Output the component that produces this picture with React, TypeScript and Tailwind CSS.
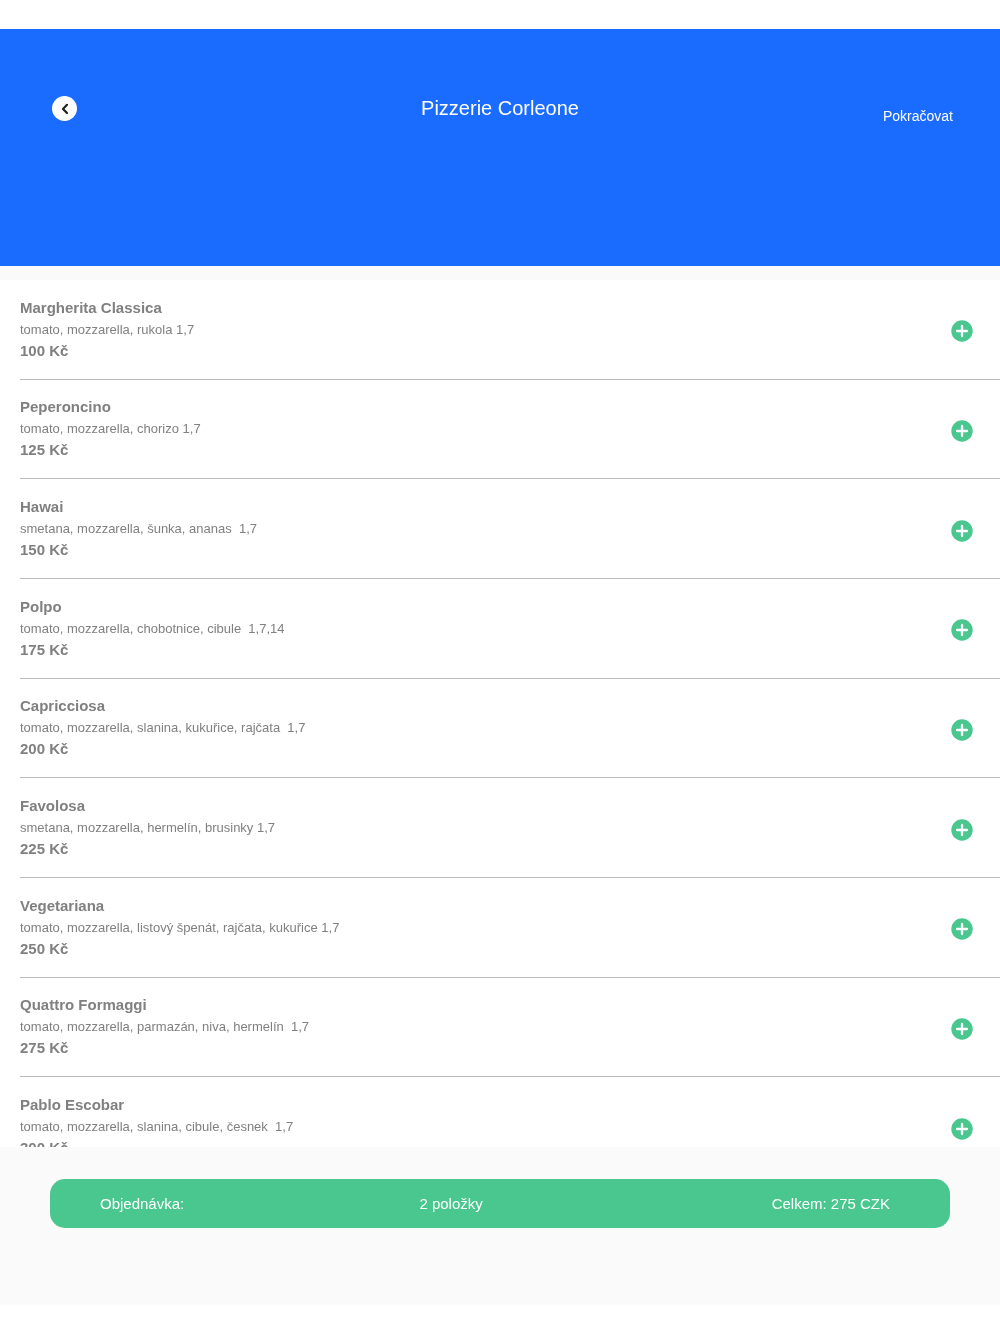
type Pizza = {
  name: string;
  toppings: string;
  price: number;
};

const menu: Pizza[] = [
  { name: 'Margherita Classica', toppings: 'tomato, mozzarella, rukola 1,7', price: 100 },
  { name: 'Peperoncino', toppings: 'tomato, mozzarella, chorizo 1,7', price: 125 },
  { name: 'Hawai', toppings: 'smetana, mozzarella, šunka, ananas  1,7', price: 150 },
  { name: 'Polpo', toppings: 'tomato, mozzarella, chobotnice, cibule  1,7,14', price: 175 },
  { name: 'Capricciosa', toppings: 'tomato, mozzarella, slanina, kukuřice, rajčata  1,7', price: 200 },
  { name: 'Favolosa', toppings: 'smetana, mozzarella, hermelín, brusinky 1,7', price: 225 },
  { name: 'Vegetariana', toppings: 'tomato, mozzarella, listový špenát, rajčata, kukuřice 1,7', price: 250 },
  { name: 'Quattro Formaggi', toppings: 'tomato, mozzarella, parmazán, niva, hermelín  1,7', price: 275 },
  { name: 'Pablo Escobar', toppings: 'tomato, mozzarella, slanina, cibule, česnek  1,7', price: 300 },
];

function Header() {
  return (
    <header className="bg-[#1a6bff] text-white h-[237px] pt-[67px] px-[47px] grid grid-cols-[1fr_auto_1fr] items-start">
      <button type="button" aria-label="Zpět" className="ml-[5px] size-[25px] rounded-full bg-white">
        <svg viewBox="0 0 25 25" className="size-full" fill="none" stroke="#222" strokeWidth="2.2" strokeLinecap="round" strokeLinejoin="round">
          <path d="M15 8.8l-4 4.1 4 4.1" />
        </svg>
      </button>
      <h1 className="text-[20px] leading-6">Pizzerie Corleone</h1>
      <button type="button" className="mt-3 justify-self-end text-sm leading-4">Pokračovat</button>
    </header>
  );
}

function MenuRow({ pizza }: { pizza: Pizza }) {
  return (
    <li className="flex items-center justify-between border-b border-[#bcbcbc] pr-[27px]">
      <div className="text-[#808080]">
        <h2 className="text-[15px] leading-[22px] font-bold">{pizza.name}</h2>
        <p className="text-[13px] leading-[21px] whitespace-pre">{pizza.toppings}</p>
        <p className="text-[15px] leading-[22px] font-bold">{pizza.price} Kč</p>
      </div>
      <button type="button" aria-label={`Přidat ${pizza.name}`} className="mt-1 size-[22px]">
        <svg viewBox="0 0 22 22" className="size-full">
          <circle cx="11" cy="11" r="10.7" fill="#49c78f" />
          <path d="M11 6v10M6 11h10" stroke="#fff" strokeWidth="2.3" strokeLinecap="round" />
        </svg>
      </button>
    </li>
  );
}

function OrderBar() {
  return (
    <div className="h-[158px] px-[50px] pt-8">
      <button
        type="button"
        className="grid w-full grid-cols-[7fr_2fr_9fr] items-center rounded-[15px] bg-[#49c78f] h-[49px] pl-[50px] pr-[60px] text-[15px] leading-5 text-white whitespace-nowrap"
      >
        <span className="text-left">Objednávka:</span>
        <span className="text-center">2 položky</span>
        <span className="text-right">Celkem: 275 CZK</span>
      </button>
    </div>
  );
}

export default function App() {
  return (
    <div className="bg-white py-[29px] font-['Liberation_Sans',Arial,sans-serif]">
      <div className="bg-[#fafafa]">
        <Header />
        <main className="mt-[14px] h-[867px] overflow-y-auto bg-white pl-5 [scrollbar-width:none]">
          {/* rows share the list height evenly */}
          <ul className="grid h-[897px] auto-rows-fr">
            {menu.map((pizza) => (
              <MenuRow key={pizza.name} pizza={pizza} />
            ))}
          </ul>
        </main>
        <OrderBar />
      </div>
    </div>
  );
}
